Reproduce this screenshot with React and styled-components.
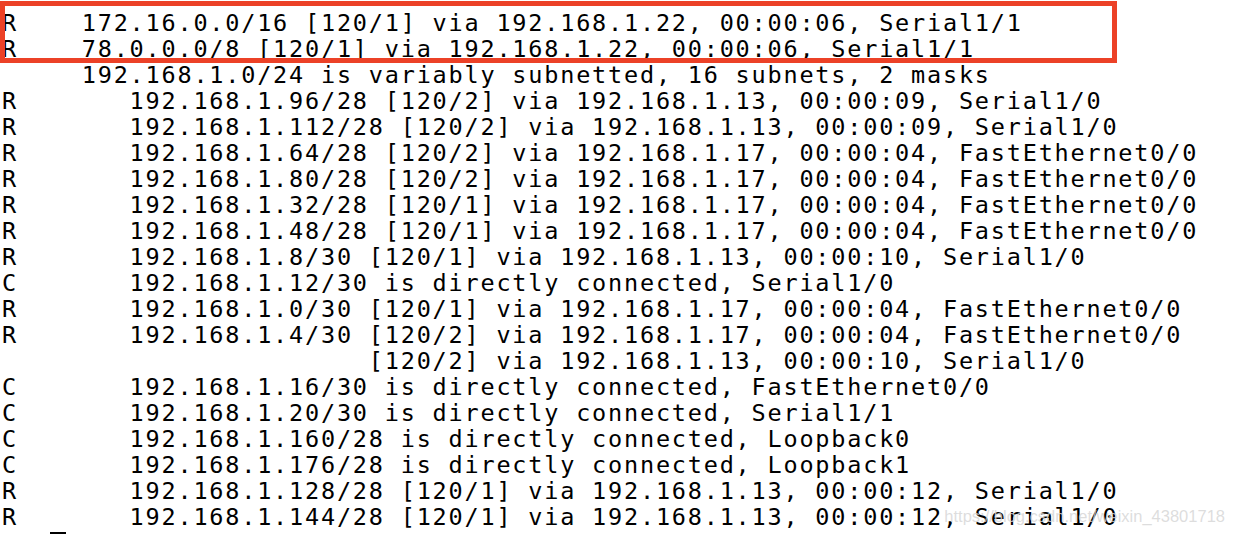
import React from 'react';
import styled, { createGlobalStyle } from 'styled-components';

const GlobalStyle = createGlobalStyle`
  html, body {
    margin: 0;
    padding: 0;
    background: #ffffff;
  }
`

const Screen = styled.div`
  position: relative;
  width: 1234px;
  height: 534px;
  overflow: hidden;
  background: #ffffff;
  padding: 10px 0 0 2px;
  box-sizing: border-box;
  font-family: "DejaVu Sans Mono", "Liberation Mono", monospace;
  font-size: 23.5px;
  letter-spacing: 1.8px;
  line-height: 26px;
  color: #000000;
`

const Highlight = styled.div`
  position: relative;

  &::after {
    content: '';
    position: absolute;
    left: -2px;
    top: -9px;
    width: 1117px;
    height: 62px;
    box-sizing: border-box;
    border: 5px solid #ec4127;
    pointer-events: none;
  }
`

const Row = styled.div`
  white-space: pre;
  height: 26px;
`

const Cursor = styled.div`
  width: 16px;
  height: 2px;
  margin-left: 48px;
  margin-top: 2px;
  background: #000000;
`

const Watermark = styled.div`
  position: absolute;
  right: 9px;
  bottom: 9px;
  font-family: "Liberation Sans", Arial, sans-serif;
  font-size: 16.5px;
  letter-spacing: 0;
  line-height: 18px;
  color: rgba(214, 214, 214, 0.82);
`

const highlighted = [
  ['R', 5, '172.16.0.0/16 [120/1] via 192.168.1.22, 00:00:06, Serial1/1'],
  ['R', 5, '78.0.0.0/8 [120/1] via 192.168.1.22, 00:00:06, Serial1/1'],
]

const routes = [
  ['', 5, '192.168.1.0/24 is variably subnetted, 16 subnets, 2 masks'],
  ['R', 8, '192.168.1.96/28 [120/2] via 192.168.1.13, 00:00:09, Serial1/0'],
  ['R', 8, '192.168.1.112/28 [120/2] via 192.168.1.13, 00:00:09, Serial1/0'],
  ['R', 8, '192.168.1.64/28 [120/2] via 192.168.1.17, 00:00:04, FastEthernet0/0'],
  ['R', 8, '192.168.1.80/28 [120/2] via 192.168.1.17, 00:00:04, FastEthernet0/0'],
  ['R', 8, '192.168.1.32/28 [120/1] via 192.168.1.17, 00:00:04, FastEthernet0/0'],
  ['R', 8, '192.168.1.48/28 [120/1] via 192.168.1.17, 00:00:04, FastEthernet0/0'],
  ['R', 8, '192.168.1.8/30 [120/1] via 192.168.1.13, 00:00:10, Serial1/0'],
  ['C', 8, '192.168.1.12/30 is directly connected, Serial1/0'],
  ['R', 8, '192.168.1.0/30 [120/1] via 192.168.1.17, 00:00:04, FastEthernet0/0'],
  ['R', 8, '192.168.1.4/30 [120/2] via 192.168.1.17, 00:00:04, FastEthernet0/0'],
  ['', 23, '[120/2] via 192.168.1.13, 00:00:10, Serial1/0'],
  ['C', 8, '192.168.1.16/30 is directly connected, FastEthernet0/0'],
  ['C', 8, '192.168.1.20/30 is directly connected, Serial1/1'],
  ['C', 8, '192.168.1.160/28 is directly connected, Loopback0'],
  ['C', 8, '192.168.1.176/28 is directly connected, Loopback1'],
  ['R', 8, '192.168.1.128/28 [120/1] via 192.168.1.13, 00:00:12, Serial1/0'],
  ['R', 8, '192.168.1.144/28 [120/1] via 192.168.1.13, 00:00:12, Serial1/0'],
]

const line = ([code, col, text]) => code.padEnd(col, ' ') + text

const App = () =>
  <Screen>
    <GlobalStyle />
    <Highlight>
      {highlighted.map((r, i) => <Row key={i}>{line(r)}</Row>)}
    </Highlight>
    {routes.map((r, i) => <Row key={i}>{line(r)}</Row>)}
    <Cursor />
    <Watermark>https://blog.csdn.net/weixin_43801718</Watermark>
  </Screen>

export default App
